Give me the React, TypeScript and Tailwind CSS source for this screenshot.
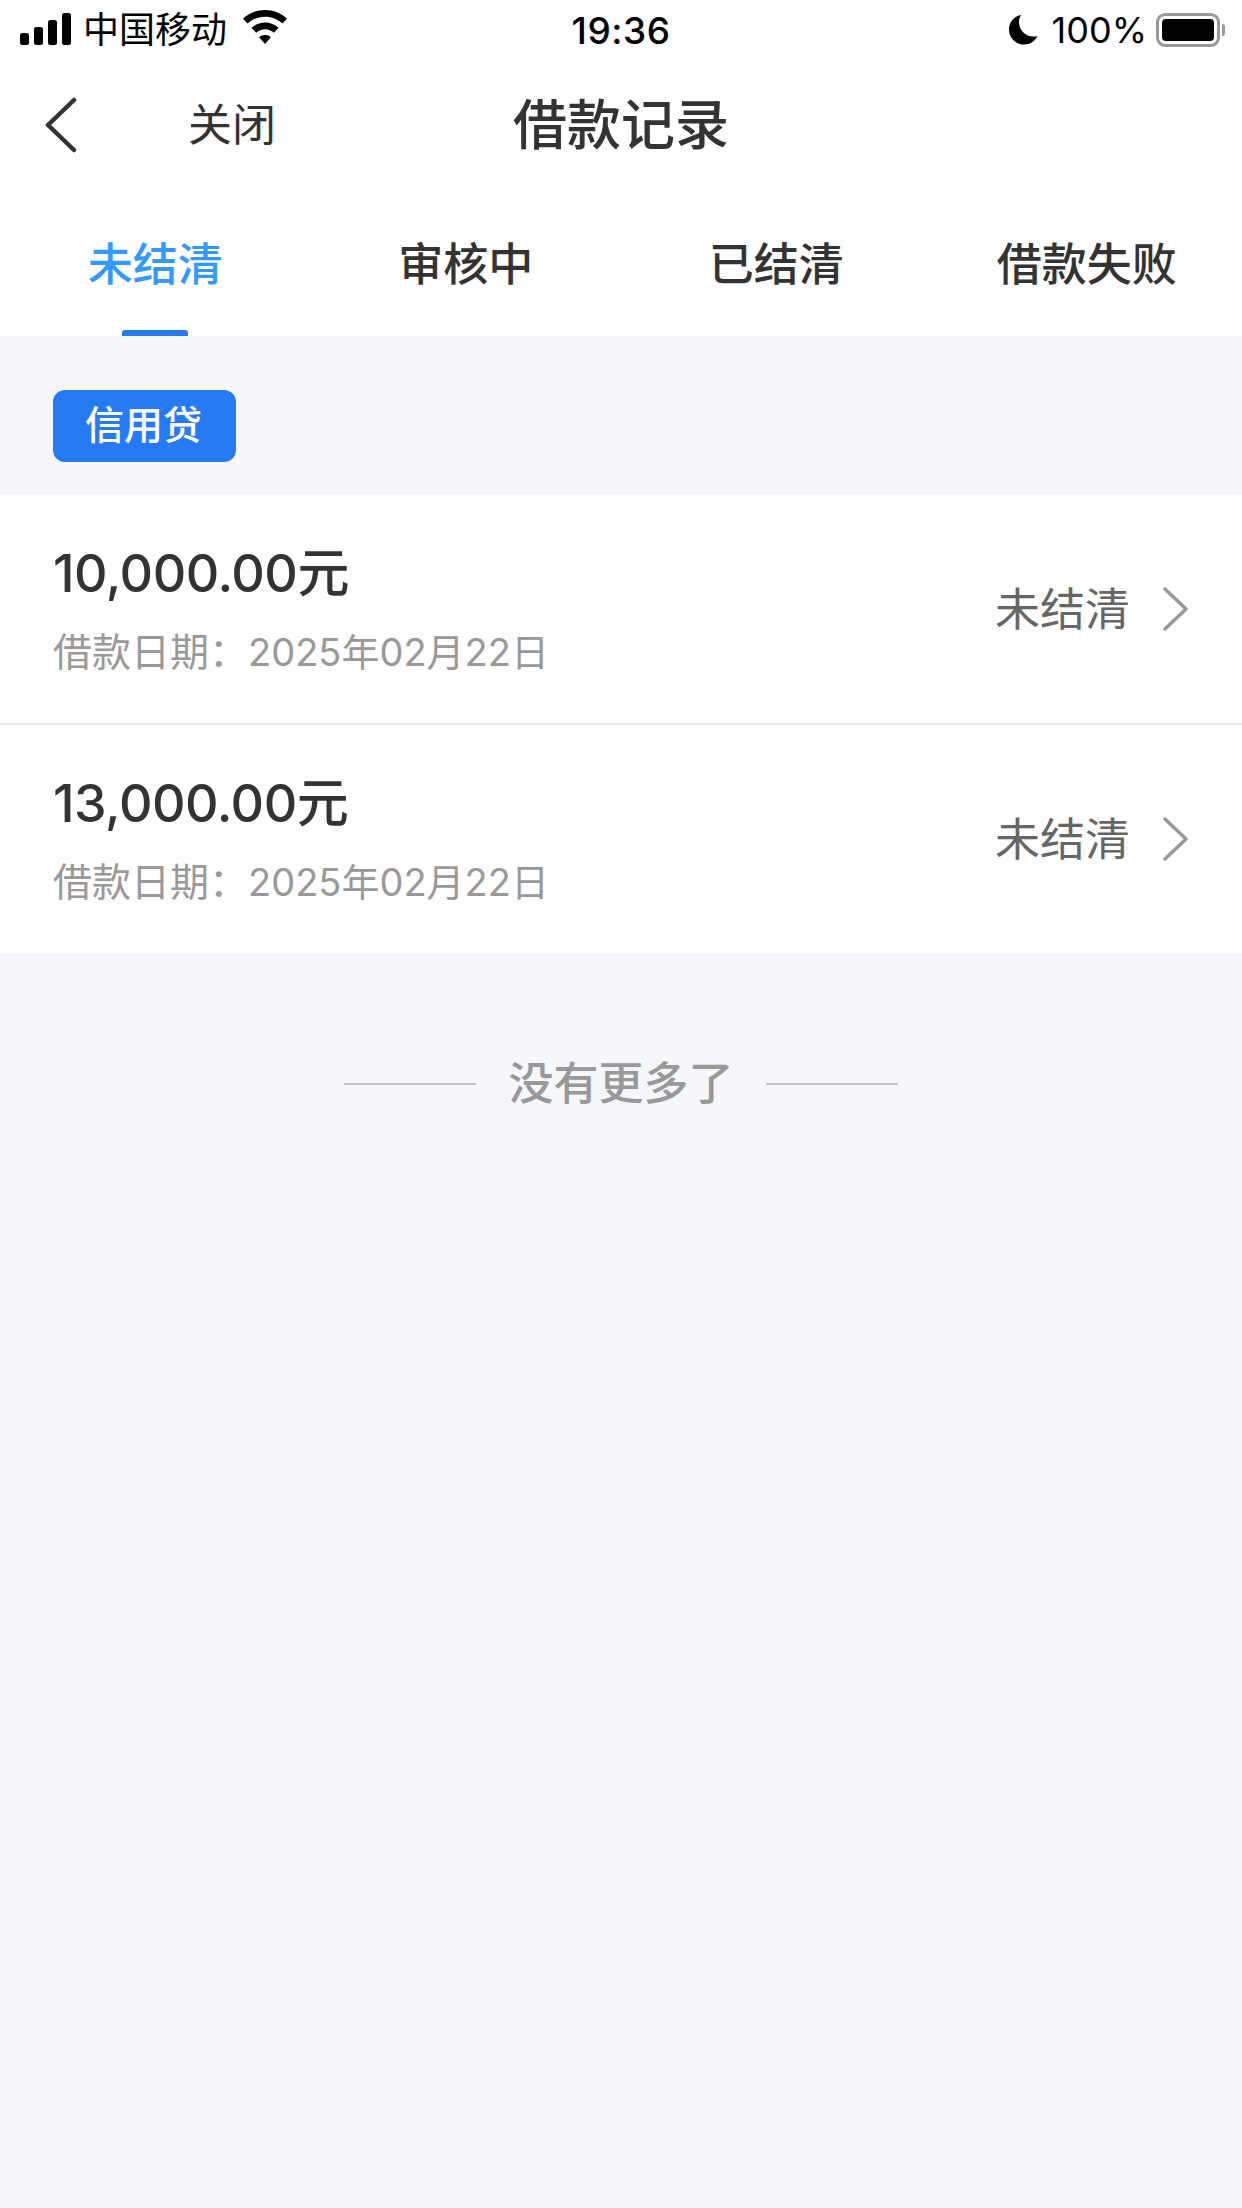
const FONT = "font-['Inter','Noto_Sans_CJK_SC',sans-serif]";

const tabs = ['未结清', '审核中', '已结清', '借款失败'];

const loans = [
  { amount: '10,000.00元', date: '2025年02月22日' },
  { amount: '13,000.00元', date: '2025年02月22日' },
];

function StatusBar() {
  return (
    <div className="h-[60px] flex items-center justify-between pl-[20px] pr-[17px] text-black">
      <div className="flex items-center w-[400px]">
        <svg width="52" height="34" viewBox="0 0 52 34" fill="currentColor">
          <rect x="0" y="20" width="9" height="12" rx="2.5" />
          <rect x="14" y="14" width="9" height="18" rx="2.5" />
          <rect x="28" y="7" width="9" height="25" rx="2.5" />
          <rect x="42" y="0" width="9" height="32" rx="2.5" />
        </svg>
        <span className="ml-[11px] text-[36px] leading-none">中国移动</span>
        <svg className="ml-[15px] mb-[4px]" width="46" height="36" viewBox="0 0 46 36" fill="currentColor">
          <path d="M23 0C14.5 0 6.8 3.3 1 8.7l4.6 4.9C10.2 9.3 16.3 6.700 23 6.700s12.800 2.600 17.400 6.900L45 8.700C39.200 3.300 31.500 0 23 0z" />
          <path d="M23 12.500c-5.200 0-9.900 2-13.500 5.300l4.700 5C16.500 20.600 19.600 19.300 23 19.300s6.500 1.300 8.800 3.500l4.700-5C32.900 14.500 28.200 12.500 23 12.500z" />
          <path d="M23 25c-2.300 0-4.400.9-5.900 2.300L23 34l5.900-6.700C27.400 25.900 25.300 25 23 25z" />
        </svg>
      </div>
      <span className="text-[37px] font-medium leading-none tracking-[0.5px] mr-[3px]">19:36</span>
      <div className="flex items-center justify-end w-[400px]">
        <svg width="30" height="32" viewBox="0 0 30 32" fill="currentColor">
          <path d="M12.500 1C5.800 2.500 1 8.400 1 15.500 1 23.800 7.700 30.500 16 30.500c6 0 11.100-3.500 13.500-8.500-1.300.4-2.700.6-4.200.6-7.900 0-14.300-6.400-14.300-14.300 0-2.500.7-5 1.900-7.300z" />
        </svg>
        <span className="ml-[14px] text-[36px] leading-none">100%</span>
        <div className="ml-[9px] flex items-center">
          <div className="w-[64px] h-[34px] rounded-[9px] border-[3px] border-[#999999] p-[3px]">
            <div className="w-full h-full bg-black rounded-[4px]" />
          </div>
          <div className="ml-[2px] w-[3px] h-[12px] rounded-r-[3px] bg-[#999999]" />
        </div>
      </div>
    </div>
  );
}

function NavBar() {
  return (
    <div className="h-[130px] grid grid-cols-[1fr_auto_1fr] items-center text-[#333333]">
      <div className="flex items-center pl-[45px]">
        <svg width="32" height="56" viewBox="0 0 32 56" fill="none" stroke="#333333" strokeWidth="4.500" strokeLinecap="round" strokeLinejoin="round">
          <path d="M29 3 L3 28 L29 53" />
        </svg>
        <span className="ml-[111px] text-[44px] leading-none">关闭</span>
      </div>
      <div className="text-[54px] font-medium leading-none pt-[1px]">借款记录</div>
      <div />
    </div>
  );
}

function Tabs() {
  return (
    <div className="h-[146px] flex">
      {tabs.map((tab, i) => (
        <div key={tab} className="relative flex-1 flex justify-center pt-[44px]">
          <span className={`text-[45px] font-medium leading-none h-[60px] flex items-center ${i === 0 ? 'text-[#3399ff]' : 'text-[#333333]'}`}>
            {tab}
          </span>
          {i === 0 && <div className="absolute bottom-0 left-[122px] w-[66px] h-[6px] rounded-t-[3px] bg-[#277bf2]" />}
        </div>
      ))}
    </div>
  );
}

function LoanRow({ amount, date, last }: { amount: string; date: string; last: boolean }) {
  return (
    <div className={`bg-white pl-[53px] pr-[52px] flex items-center justify-between ${last ? 'h-[228px]' : 'h-[230px] border-b-2 border-[#e9e9e9]'}`}>
      <div>
        <div className="text-[52px] font-medium leading-none text-[#333333] tracking-[-0.5px]">{amount}</div>
        <div className="mt-[32px] text-[39px] leading-none text-[#999999] whitespace-nowrap">
          借款日期：<span className="text-[38px]">{date}</span>
        </div>
      </div>
      <div className="flex items-center">
        <span className="text-[45px] leading-none text-[#666666]">未结清</span>
        <svg className="ml-[32px] mr-[1px]" width="27" height="46" viewBox="0 0 27 46" fill="none" stroke="#999999" strokeWidth="3.500" strokeLinecap="round" strokeLinejoin="round">
          <path d="M3 3 L24 23 L3 43" />
        </svg>
      </div>
    </div>
  );
}

export default function App() {
  return (
    <div className={`w-[1242px] h-[2208px] bg-[#f6f7fb] ${FONT}`}>
      <div className="bg-white">
        <StatusBar />
        <NavBar />
        <Tabs />
      </div>
      <div className="pt-[54px] pb-[33px] pl-[53px]">
        <div className="w-[183px] h-[72px] rounded-[12px] bg-[#277bf2] text-white text-[39px] font-medium leading-none flex items-center justify-center pb-[3px] pr-[2px]">
          信用贷
        </div>
      </div>
      <div>
        {loans.map((loan, i) => (
          <LoanRow key={loan.amount} amount={loan.amount} date={loan.date} last={i === loans.length - 1} />
        ))}
      </div>
      <div className="mt-[108px] flex items-center justify-center">
        <div className="w-[132px] h-[2px] bg-[#c4c4c4]" />
        <span className="mx-[32px] text-[45px] font-medium leading-none text-[#999999]">没有更多了</span>
        <div className="w-[132px] h-[2px] bg-[#c4c4c4]" />
      </div>
    </div>
  );
}
